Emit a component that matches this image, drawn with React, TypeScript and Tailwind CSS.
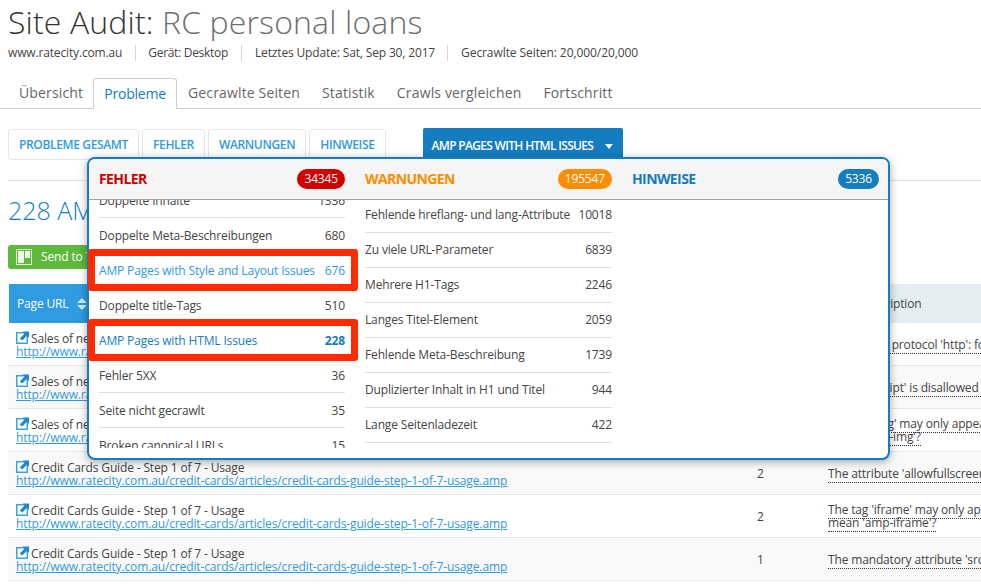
import { ReactNode } from "react";

const errors = [
  { label: "Doppelte Inhalte", value: "1336" },
  { label: "Doppelte Meta-Beschreibungen", value: "680" },
  { label: "AMP Pages with Style and Layout Issues", value: "676", link: true },
  { label: "Doppelte title-Tags", value: "510" },
  { label: "AMP Pages with HTML Issues", value: "228", active: true },
  { label: "Fehler 5XX", value: "36" },
  { label: "Seite nicht gecrawlt", value: "35" },
  { label: "Broken canonical URLs", value: "15" },
];

const warnings = [
  ["Fehlende hreflang- und lang-Attribute", "10018"],
  ["Zu viele URL-Parameter", "6839"],
  ["Mehrere H1-Tags", "2246"],
  ["Langes Titel-Element", "2059"],
  ["Fehlende Meta-Beschreibung", "1739"],
  ["Duplizierter Inhalt in H1 und Titel", "944"],
  ["Lange Seitenladezeit", "422"],
];

const salesUrl = "http://www.ratecity.com.au/credit-cards/articles/sales-of-new-credit-cards.amp";
const guideUrl = "http://www.ratecity.com.au/credit-cards/articles/credit-cards-guide-step-1-of-7-usage.amp";
const guideTitle = "Credit Cards Guide - Step 1 of 7 - Usage";

const rows = [
  { title: "Sales of new credit cards", url: salesUrl, count: "3", desc: ["Invalid URL protocol 'http': for attribute 'src' in tag"] },
  { title: "Sales of new credit cards", url: salesUrl, count: "3", desc: ["The tag 'script' is disallowed except in specific forms"] },
  { title: "Sales of new credit cards", url: salesUrl, count: "2", desc: ["The tag 'img' may only appear as a descendant of tag", "mean 'amp-img'?"] },
  { title: guideTitle, url: guideUrl, count: "2", desc: ["The attribute 'allowfullscreen' may not appear in tag"] },
  { title: guideTitle, url: guideUrl, count: "2", desc: ["The tag 'iframe' may only appear as a descendant of tag", "mean 'amp-iframe'?"] },
  { title: guideTitle, url: guideUrl, count: "1", desc: ["The mandatory attribute 'src' is missing in tag"] },
];

function ExternalIcon() {
  return (
    <svg className="mr-[2px] inline-block h-[13px] w-[13px] align-[-1px]" viewBox="0 0 13 13">
      <rect x="0.75" y="1.75" width="10.5" height="10.5" fill="#fff" stroke="#3aa3e6" strokeWidth="1.5" />
      <path d="M6.5 0.5 H13 V7 L10.8 4.8 L6.3 9.6 L3.8 7.4 L8.6 2.6Z" fill="#1f86cc" />
    </svg>
  );
}

function FilterTab({ children }: { children: ReactNode }) {
  return (
    <button className="flex h-[31px] items-center rounded-[3px] border border-[#e2e8ea] bg-white px-[10px] text-[12px] font-semibold tracking-[-0.35px] whitespace-nowrap text-[#2f9be0]">
      {children}
    </button>
  );
}

function MenuHead({ title, count, titleClass, pillClass, wide }: { title: string; count: string; titleClass: string; pillClass: string; wide: string }) {
  return (
    <div className={`flex items-center justify-between ${wide}`}>
      <span className={`-mt-[2px] text-[14px] font-bold tracking-[-0.6px] ${titleClass}`}>{title}</span>
      <span className={`flex h-[20px] items-center rounded-full px-[7px] text-[12px] text-white ${pillClass}`}>{count}</span>
    </div>
  );
}

function IssuesMenu() {
  return (
    <div className="absolute left-[87px] top-[157px] z-10 h-[303px] w-[803px] rounded-[8px] border-2 border-[#147dbf] bg-white shadow-[0_2px_8px_rgba(0,0,0,0.35)]">
      <div className="flex h-[41px] items-center gap-[20px] rounded-t-[6px] border-b border-[#a3a3a3] bg-[#f5f5f5] pl-[10px]">
        <MenuHead title="FEHLER" count="34345" titleClass="text-[#cf0000]" pillClass="bg-[#d30000]" wide="w-[246px]" />
        <MenuHead title="WARNUNGEN" count="195547" titleClass="text-[#ff8c00]" pillClass="bg-[#ff8c00]" wide="w-[247px]" />
        <MenuHead title="HINWEISE" count="5336" titleClass="text-[#147dbf]" pillClass="bg-[#147dbf]" wide="w-[247px]" />
      </div>
      <div className="flex h-[248px] gap-[20px] overflow-hidden pl-[10px]">
        <div className="-mt-[17px] w-[246px] shrink-0">
          {errors.map((e) => (
            <div
              key={e.label}
              className={`flex h-[35px] items-center justify-between border-b border-[#e0e0e0] pt-[2px] text-[12px] whitespace-nowrap ${e.active ? "text-[#147dbf]" : e.link ? "text-[#2f9be0]" : "text-[#444]"}`}
            >
              <span>{e.label}</span>
              <span className={e.active ? "font-bold" : ""}>{e.value}</span>
            </div>
          ))}
        </div>
        <div className="-mt-[2px] w-[247px] shrink-0">
          {warnings.map(([label, value]) => (
            <div key={label} className="flex h-[35px] items-center justify-between border-b border-[#e0e0e0] text-[12px] whitespace-nowrap text-[#444]">
              <span>{label}</span>
              <span>{value}</span>
            </div>
          ))}
        </div>
      </div>
      <div className="absolute left-[-1px] top-[90px] h-[42px] w-[270px] rounded-[3px] border-[7px] border-[#ff2a00]" />
      <div className="absolute left-[-1px] top-[160px] h-[42px] w-[270px] rounded-[3px] border-[7px] border-[#ff2a00]" />
    </div>
  );
}

export default function App() {
  return (
    <div className="relative h-[586px] w-[981px] overflow-hidden bg-white font-['Open_Sans',sans-serif] tracking-[-0.15px] text-[#444]">
      <div className="pl-[8px] pt-[2px]">
        <h1 className="text-[32px] leading-[40px] font-light tracking-[0.14px] text-[#333]">
          Site Audit: <span className="text-[#6e6e6e]">RC personal loans</span>
        </h1>
        <div className="mt-[1px] flex h-[20px] items-center text-[12px] whitespace-nowrap text-[#444]">
          <span className="border-r border-[#d5d5d5] pr-[13px] leading-[16px]">www.ratecity.com.au</span>
          <span className="border-r border-[#d5d5d5] pl-[12px] pr-[13px] leading-[16px] tracking-[-0.3px]">Gerät: Desktop</span>
          <span className="border-r border-[#d5d5d5] pl-[13px] pr-[12px] leading-[16px]">Letztes Update: Sat, Sep 30, 2017</span>
          <span className="pl-[13px] leading-[16px] tracking-[-0.08px]">Gecrawlte Seiten: 20,000/20,000</span>
        </div>
      </div>

      <div className="mt-[14px] flex h-[32px] items-end border-b border-[#cfcfcf] pl-[8px] text-[14px] font-medium tracking-[0.15px] text-[#666]">
        <span className="flex h-[31px] items-center pl-[11px] pr-[10px]">Übersicht</span>
        <span className="-mb-px flex h-[31px] items-center rounded-t-[3px] border border-b-0 border-[#cfcfcf] bg-white px-[10px] pb-[2px] tracking-[-0.2px] text-[#147dbf]">Probleme</span>
        <span className="flex h-[31px] items-center px-[11px]">Gecrawlte Seiten</span>
        <span className="flex h-[31px] items-center px-[11px]">Statistik</span>
        <span className="flex h-[31px] items-center px-[11px]">Crawls vergleichen</span>
        <span className="flex h-[31px] items-center px-[11px]">Fortschritt</span>
      </div>

      <div className="mt-[20px] flex items-start gap-[3px] pl-[8px]">
        <FilterTab>PROBLEME GESAMT</FilterTab>
        <FilterTab>FEHLER</FilterTab>
        <FilterTab>WARNUNGEN</FilterTab>
        <FilterTab>HINWEISE</FilterTab>
        <div className="-mt-px ml-[34px] flex h-[36px] w-[200px] shrink-0 items-center justify-between rounded-t-[2px] bg-[#147dbf] pl-[9px] pr-[10px] text-[12px] font-semibold tracking-[-0.68px] whitespace-nowrap text-white">
          <span>AMP PAGES WITH HTML ISSUES</span>
          <span className="h-0 w-0 border-x-[4px] border-t-[5px] border-x-transparent border-t-white" />
        </div>
      </div>

      <div className="ml-[8px] mt-[16px] border-t border-[#e3e3e3]" />

      <div className="mt-[13px] pl-[8px] text-[25px] leading-[32px] font-light tracking-normal whitespace-nowrap text-[#147dbf]">228 AMP Pages with HTML Issues</div>

      <div className="ml-[8px] mt-[19px] flex h-[24px] w-[120px] items-center gap-[9px] rounded-[3px] bg-[#5db83c] pl-[8px] text-[12px] whitespace-nowrap text-white">
        <span className="flex h-[16px] w-[16px] gap-[1px] border border-white/80 p-[1px]">
          <span className="h-full w-[6px] bg-white/90" />
          <span className="h-[7px] w-[5px] bg-white/90" />
        </span>
        Send to Trello
      </div>

      <div className="ml-[9px] mt-[15px] flex h-[39px] items-center bg-[#e6edf0] text-[12px] whitespace-nowrap">
        <div className="flex h-full w-[100px] shrink-0 items-center gap-[9px] bg-[#2f9be0] pl-[8px] text-white">
          Page URL
          <span className="flex flex-col gap-[2px]">
            <span className="h-0 w-0 border-x-[5px] border-b-[5px] border-x-transparent border-b-white/80" />
            <span className="h-0 w-0 border-x-[5px] border-t-[5px] border-x-transparent border-t-white/80" />
          </span>
        </div>
        <span className="ml-[719px] text-[#444]">Issue Description</span>
      </div>

      <div className="ml-[8px]">
        {rows.map((row, i) => (
          <div key={i} className={`flex h-[43px] items-center border-b border-[#e4e8ea] text-[12px] leading-[13px] whitespace-nowrap ${i % 2 === 1 ? "bg-[#f9f9f9]" : "bg-white"}`}>
            <div className="w-[749px] shrink-0 pl-[8px]">
              <div className="text-[#444]"><ExternalIcon />{row.title}</div>
              <div className="tracking-[-0.13px] text-[#2f9be0] underline">{row.url}</div>
            </div>
            <div className="w-[71px] shrink-0 text-[#444]">{row.count}</div>
            <div className="shrink-0 text-[#444]">
              {row.desc.map((line) => (
                <div key={line}><span className="border-b border-dotted border-[#333]">{line}</span></div>
              ))}
            </div>
          </div>
        ))}
      </div>

      <IssuesMenu />
    </div>
  );
}
